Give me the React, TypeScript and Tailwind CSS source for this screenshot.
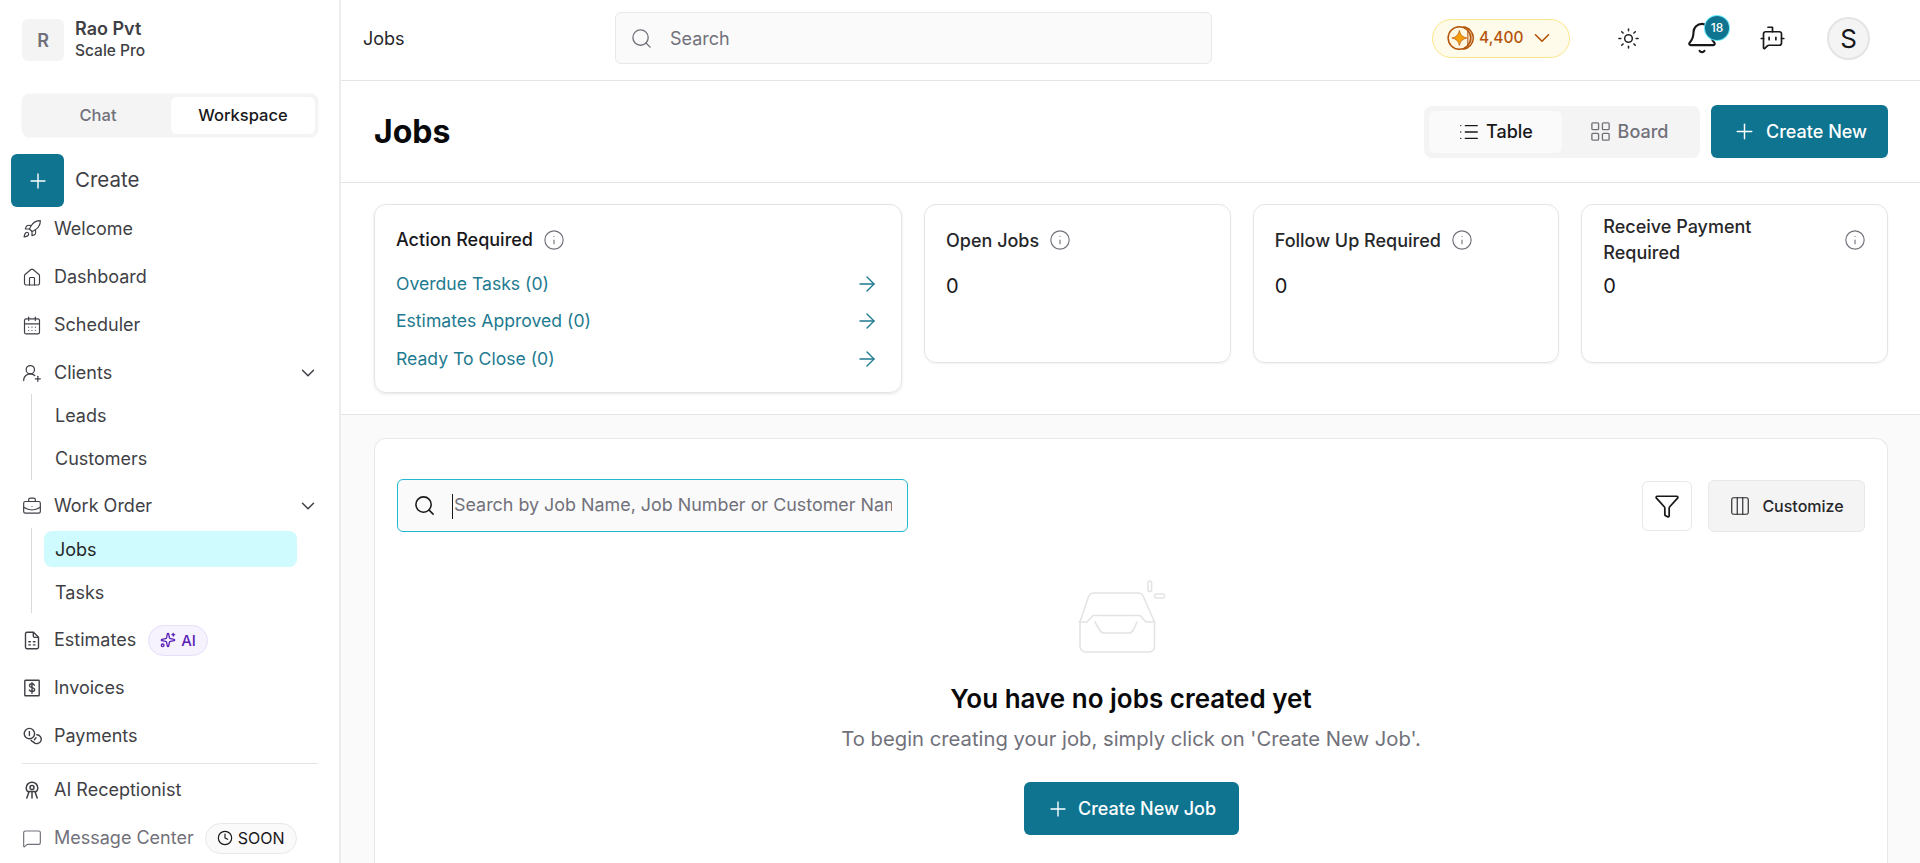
import type { ReactNode } from "react";
import {
  ArrowRight,
  Bell,
  BotMessageSquare,
  BriefcaseBusiness,
  CalendarDays,
  ChevronDown,
  Clock,
  Columns3,
  Funnel,
  House,
  Info,
  LayoutGrid,
  List,
  MessageSquare,
  Plus,
  Rocket,
  Search,
  Sparkles,
  Sun,
  UserRoundPlus,
} from "lucide-react";

function EstimateIcon() {
  return (
    <svg width="23" height="23" viewBox="0 0 20 20" fill="none" stroke="currentColor" strokeWidth="1.4" strokeLinejoin="round" strokeLinecap="round">
      <path d="M3.500 3.200c0-.8.6-1.400 1.400-1.400h6.600l5 5v10c0 .8-.6 1.400-1.400 1.400H4.900c-.8 0-1.400-.6-1.400-1.400z" />
      <path d="M11.300 2v3.600c0 .8.6 1.300 1.300 1.300h3.700" />
      <path d="M6.800 11.200h1.600M11.400 11.200H13M6.800 14.400h1.600M11.400 14.400H13" />
    </svg>
  );
}

function InvoiceIcon() {
  return (
    <svg width="22" height="22" viewBox="0 0 20 20" fill="none" stroke="currentColor" strokeWidth="1.400" strokeLinecap="round">
      <rect x="2.800" y="2.200" width="14.400" height="15.600" rx="0.600" />
      <path d="M12.400 7.200c-.4-.9-1.300-1.400-2.400-1.400-1.400 0-2.500.7-2.500 1.900 0 2.700 5.100 1.100 5.100 3.900 0 1.200-1.100 1.900-2.600 1.900-1.200 0-2.200-.5-2.600-1.500M10 4.600v10.600" />
    </svg>
  );
}

function PaymentIcon() {
  return (
    <svg width="22" height="22" viewBox="0 0 20 20" fill="none" stroke="currentColor" strokeWidth="1.400" strokeLinecap="round">
      <circle cx="7.400" cy="7.600" r="5.200" />
      <path d="M7.400 5.600v4" />
      <path d="M11.600 16.200a4.400 4.400 0 1 0 3.200-7.400" />
      <path d="M11.600 16.200a4.600 4.600 0 0 1-2.600-2M14 11.800l-1.600 2" />
    </svg>
  );
}

function ReceptionistIcon() {
  return (
    <svg width="22" height="22" viewBox="0 0 20 20" fill="none" stroke="currentColor" strokeWidth="1.500" strokeLinecap="round">
      <path d="M4.200 8a5.800 5.800 0 1 1 11.600 0c0 1.400-.5 2.500-1.300 3.400H5.500A5 5 0 0 1 4.200 8z" />
      <circle cx="10" cy="7.600" r="2" />
      <path d="M10 11.600v6.400M7 11.800 4.800 18M13 11.800l2.200 6.200" />
    </svg>
  );
}

function CoinIcon() {
  return (
    <svg width="30" height="30" viewBox="0 0 28 28" fill="none">
      <circle cx="12.500" cy="14" r="10.500" stroke="#b45309" strokeWidth="1.400" fill="#fff7e0" />
      <path d="M16 3.600c5.400.5 9.500 5 9.500 10.400s-4.100 9.900-9.500 10.400" stroke="#b45309" strokeWidth="1.400" />
      <path d="M20.400 6.200v15.600M23.200 9.600v8.800" stroke="#b45309" strokeWidth="1" />
      <path d="M12.500 7 C13.200 11 15.500 13.300 19.500 14 C15.500 14.700 13.200 17 12.500 21 C11.800 17 9.500 14.700 5.500 14 C9.500 13.300 11.800 11 12.500 7z" fill="#f59e0b" stroke="#b45309" strokeWidth="0.600" />
    </svg>
  );
}

function EmptyBoxIcon() {
  return (
    <svg width="88" height="73" viewBox="0 0 88 73" fill="none" stroke="#e4e4e7" strokeWidth="1.600" strokeLinecap="round" strokeLinejoin="round">
      <path d="M10 18c.7-3 3-5 6-5h44c3 0 5.300 2 6 5l10.500 24v24c0 3.500-2.500 6-6 6H7.500c-3 0-5.500-2.500-5.500-6V42z" />
      <path d="M1 42h8l6-6.500h47l6 6.500h9" />
      <path d="M17 42l5 8.500c1 1.700 2.500 2.500 4.500 2.500h24c2 0 3.500-.8 4.500-2.500l4-8.500" />
      <rect x="70" y="1" width="3.600" height="10.500" rx="1.800" />
      <rect x="76.500" y="14" width="10" height="4" rx="2" />
    </svg>
  );
}

function NavRow({ icon, label, chevron, muted, children }: { icon: ReactNode; label: string; chevron?: boolean; muted?: boolean; children?: ReactNode }) {
  return (
    <div className="flex h-12 items-center text-[18px] leading-none">
      <span className={muted ? "flex w-5 justify-center text-[#71717a]" : "flex w-5 justify-center text-[#3f3f46]"}>{icon}</span>
      <span className={muted ? "ml-3 text-[#71717a]" : "ml-3 text-[#3f3f46]"}>{label}</span>
      {children}
      {chevron && <ChevronDown className="-mr-[1px] ml-auto text-[#3f3f46]" size={22} strokeWidth={1.6} />}
    </div>
  );
}

function SubRow({ label, className }: { label: string; className: string }) {
  return <div className={`flex items-center pl-[23px] text-[18px] text-[#3f3f46] ${className}`}>{label}</div>;
}

function Sidebar() {
  return (
    <aside className="flex h-full w-[341px] shrink-0 flex-col overflow-hidden border-r-2 border-[#ececee] pl-[22px] pr-[21px] pt-[18px]">
      <div className="flex items-center gap-[11px]">
        <div className="flex h-[42px] w-[42px] items-center justify-center rounded-md bg-[#f4f4f5] text-[18px] font-semibold text-[#71717a]">R</div>
        <div>
          <div className="text-[18px] font-semibold leading-[22px] text-[#3f3f46]">Rao Pvt</div>
          <div className="text-[15.500px] font-medium leading-[22px] text-[#3f3f46]">Scale Pro</div>
        </div>
      </div>

      <div className="mt-[32px] flex h-[43px] rounded-lg bg-[#f4f4f5] p-[3px] shadow-[0_0_2px_rgba(0,0,0,0.08)]">
        <div className="flex flex-1 items-center justify-center text-[16.500px] font-medium text-[#71717a]">Chat</div>
        <div className="flex w-[144px] items-center justify-center rounded-md bg-white text-[16.500px] font-medium text-[#18181b]">Workspace</div>
      </div>

      <div className="-mb-[2px] -ml-[11px] mt-[17px] flex items-center gap-[11px]">
        <div className="flex h-[53px] w-[53px] items-center justify-center rounded-md bg-[#0e7490] text-white">
          <Plus size={24} strokeWidth={1.4} />
        </div>
        <span className="text-[20.500px] text-[#3f3f46]">Create</span>
      </div>

      <NavRow icon={<Rocket size={22} strokeWidth={1.4} />} label="Welcome" />
      <NavRow icon={<House size={23} strokeWidth={1.4} />} label="Dashboard" />
      <NavRow icon={<CalendarDays size={23} strokeWidth={1.4} />} label="Scheduler" />
      <NavRow icon={<UserRoundPlus size={24} strokeWidth={1.5} />} label="Clients" chevron />
      <div className="-mt-[3px] ml-[9px] border-l border-[#d9d9dc]">
        <SubRow label="Leads" className="h-[43px]" />
        <SubRow label="Customers" className="h-[43px]" />
      </div>
      <div className="mt-[2px]">
        <NavRow icon={<BriefcaseBusiness size={23} strokeWidth={1.4} />} label="Work Order" chevron />
      </div>
      <div className="-mt-[2px] ml-[9px] border-l border-[#d9d9dc] pt-[3px]">
        <div className="ml-[12px] flex h-9 w-[253px] items-center rounded-lg bg-[#cffafe] pl-[11px] text-[18px] text-[#27272a]">Jobs</div>
        <SubRow label="Tasks" className="mt-1 h-[42px]" />
      </div>
      <div className="mt-[3px]">
        <NavRow icon={<EstimateIcon />} label="Estimates">
          <span className="ml-[12px] flex h-[31px] items-center gap-[5px] rounded-full border border-[#e6defa] bg-[#f6f3ff] px-[11px] text-[15px] font-medium text-[#5b21b6]">
            <Sparkles size={16} strokeWidth={2} />
            AI
          </span>
        </NavRow>
      </div>
      <NavRow icon={<InvoiceIcon />} label="Invoices" />
      <NavRow icon={<PaymentIcon />} label="Payments" />
      <div className="mt-[3px] h-px w-[296px] bg-[#e4e4e7]" />
      <div className="mt-[2px]">
        <NavRow icon={<ReceptionistIcon />} label="AI Receptionist" />
      </div>
      <NavRow icon={<MessageSquare size={23} strokeWidth={1.4} />} label="Message Center" muted>
        <span className="ml-[11px] flex h-[31px] items-center gap-[5px] rounded-full border border-[#e8e8ea] bg-[#fafafa] px-[11px] text-[16px] text-[#18181b]">
          <Clock size={16} strokeWidth={1.75} />
          SOON
        </span>
      </NavRow>
    </aside>
  );
}

function TopBar() {
  return (
    <header className="flex h-[81px] shrink-0 items-center border-b border-[#e4e4e7] pb-[4px] pl-[22px]">
      <span className="w-[252px] text-[18px] text-[#27272a]">Jobs</span>
      <div className="flex h-[52px] w-[597px] items-center rounded-md border border-[#e8e8ea] bg-[#fafafa] pl-[14px] text-[18px] text-[#71717a]">
        <Search size={23} strokeWidth={1.4} />
        <span className="ml-[17px]">Search</span>
      </div>
      <div className="ml-[220px] flex h-[39px] w-[138px] items-center rounded-full border border-[#fde68a] bg-[#fffbeb] pl-[13px] text-[15.500px] font-medium text-[#b45309]">
        <CoinIcon />
        <span className="ml-[3px]">4,400</span>
        <ChevronDown className="ml-[5px]" size={26} strokeWidth={1.5} />
      </div>
      <div className="ml-[47px] text-[#27272a]">
        <Sun size={23} strokeWidth={1.6} />
      </div>
      <div className="relative ml-[45px] text-[#18181b]">
        <Bell size={34} strokeWidth={1.5} />
        <span className="absolute -right-[10px] -top-[5px] flex h-6 w-6 items-center justify-center rounded-full bg-[#0e7490] text-[12px] font-medium text-white ring-1 ring-[#67e8f9]">18</span>
      </div>
      <div className="ml-[40px] text-[#18181b]">
        <BotMessageSquare size={27} strokeWidth={1.5} />
      </div>
      <div className="ml-[41px] flex h-[43px] w-[43px] items-center justify-center rounded-full border-2 border-[#e4e4e7] bg-[#f4f4f5] text-[26px] text-[#18181b]">S</div>
    </header>
  );
}

function PageHeader() {
  return (
    <div className="flex h-[102px] shrink-0 items-center border-b border-[#e4e4e7] pl-[33px] pr-[32px]">
      <h1 className="text-[32px] font-bold text-[#09090b]">Jobs</h1>
      <div className="ml-auto flex h-[52px] w-[276px] items-center rounded-lg bg-[#f4f4f5] p-[5px] text-[18px] font-medium">
        <div className="flex h-[42px] w-[133px] items-center justify-center gap-[6px] rounded-md bg-[#fafafa] text-[#18181b]">
          <List size={22} strokeWidth={1.5} />
          Table
        </div>
        <div className="flex flex-1 items-center justify-center gap-[6px] text-[#71717a]">
          <LayoutGrid size={23} strokeWidth={1.4} />
          Board
        </div>
      </div>
      <button className="ml-[11px] flex h-[53px] w-[177px] items-center justify-center gap-[9px] rounded-md bg-[#0e7490] text-[18px] font-medium text-white">
        <Plus size={25} strokeWidth={1.4} />
        Create New
      </button>
    </div>
  );
}

function InfoIcon() {
  return <Info className="shrink-0 text-[#71717a]" size={22} strokeWidth={1.25} />;
}

function StatCard({ title, wrap }: { title: string; wrap?: boolean }) {
  return (
    <div className="h-[159px] flex-1 rounded-xl border border-[#e4e4e7] px-[21px] pt-[9px] shadow-[0_1px_2px_rgba(0,0,0,0.06)]">
      <div className={wrap ? "flex h-[52px] items-center justify-between" : "flex h-[52px] items-center gap-[10px]"}>
        <span className={wrap ? "w-[170px] text-[18px] font-medium leading-[26px] text-[#27272a]" : "text-[18px] font-medium text-[#27272a]"}>{title}</span>
        <InfoIcon />
      </div>
      <div className="mt-[6px] text-[20px] leading-7 text-[#18181b]">0</div>
    </div>
  );
}

function Summary() {
  const rows = ["Overdue Tasks (0)", "Estimates Approved (0)", "Ready To Close (0)"];
  return (
    <section className="flex shrink-0 items-start gap-[22px] border-b border-[#e4e4e7] pb-[21px] pl-[33px] pr-[32px] pt-[21px]">
      <div className="h-[189px] w-[528px] shrink-0 rounded-xl border border-[#e4e4e7] px-[21px] pt-[9px] shadow-[0_1px_3px_rgba(0,0,0,0.1)]">
        <div className="flex h-[51px] items-center gap-[10px]">
          <span className="text-[18px] font-medium text-[#18181b]">Action Required</span>
          <InfoIcon />
        </div>
        {rows.map((row) => (
          <div className="flex h-[37.500px] items-center justify-between pr-[1px] text-[17.600px] text-[#1d7a90]" key={row}>
            {row}
            <ArrowRight size={24} strokeWidth={1.4} />
          </div>
        ))}
      </div>
      <StatCard title="Open Jobs" />
      <StatCard title="Follow Up Required" />
      <StatCard title="Receive Payment Required" wrap />
    </section>
  );
}

function JobsPanel() {
  return (
    <div className="min-h-0 flex-1 bg-[#fafafa] pl-[33px] pr-[32px] pt-[23px]">
      <div className="h-full rounded-t-xl border border-b-0 border-[#e8e8ea] bg-white px-[22px] pt-[40px]">
        <div className="flex items-center">
          <div className="relative flex h-[53px] w-[511px] items-center rounded-md border border-[#22b8cf] bg-[#fafafa] pl-[15px] pr-[15px]">
            <Search className="shrink-0 text-[#18181b]" size={23} strokeWidth={1.6} />
            <input
              className="ml-[18px] min-w-0 flex-1 bg-transparent text-[17.900px] text-[#18181b] outline-none placeholder:text-[#71717a]"
              placeholder="Search by Job Name, Job Number or Customer Name"
              readOnly
            />
            <span className="absolute left-[54px] top-[14px] h-[25px] w-px bg-[#18181b]" />
          </div>
          <button className="ml-auto flex h-[50px] w-[50px] items-center justify-center rounded-md border border-[#e8e8ea] text-[#18181b]">
            <Funnel size={26} strokeWidth={1.6} />
          </button>
          <button className="ml-[16px] flex h-[52px] w-[157px] items-center justify-center gap-[11px] rounded-md border border-[#e8e8ea] bg-[#f4f4f5] text-[16px] font-medium text-[#27272a]">
            <Columns3 size={22} strokeWidth={1.25} />
            Customize
          </button>
        </div>

        <div className="mt-[48px] flex flex-col items-center">
          <div className="-ml-[18px]">
            <EmptyBoxIcon />
          </div>
          <h2 className="mt-[30px] text-[26px] font-semibold leading-8 text-[#09090b]">You have no jobs created yet</h2>
          <p className="mt-[8px] text-[20.250px] leading-8 text-[#71717a]">To begin creating your job, simply click on 'Create New Job'.</p>
          <button className="mt-[27px] flex h-[53px] w-[215px] items-center justify-center gap-[8px] rounded-md bg-[#0e7490] text-[18px] font-medium text-white">
            <Plus size={24} strokeWidth={1.4} />
            Create New Job
          </button>
        </div>
      </div>
    </div>
  );
}

export default function App() {
  return (
    <div className="flex h-screen overflow-hidden bg-white font-['Inter','Noto_Sans',sans-serif]">
      <Sidebar />
      <main className="flex min-w-0 flex-1 flex-col">
        <TopBar />
        <PageHeader />
        <Summary />
        <JobsPanel />
      </main>
    </div>
  );
}
